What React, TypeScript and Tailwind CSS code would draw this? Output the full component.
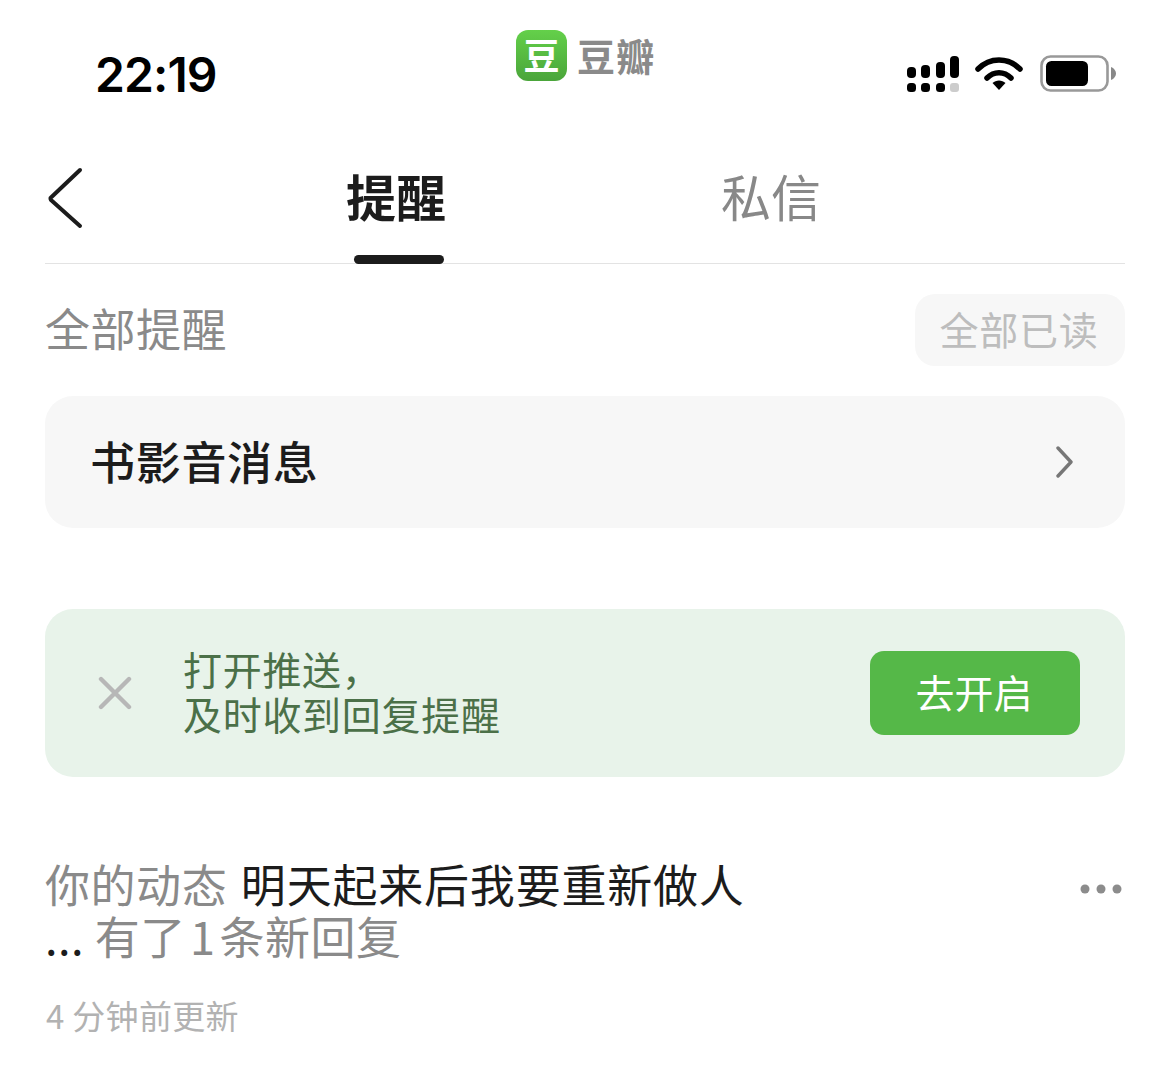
const CJK = '"Noto Sans CJK SC","Noto Sans",sans-serif';

function Signal() {
  const top = [
    [0, 12, 11],
    [14, 10, 13],
    [29, 7, 16],
    [43, 1, 22],
  ];
  return (
    <svg width="52" height="38" viewBox="0 0 52 38" className="block">
      {top.map(([x, y, h]) => (
        <rect key={x} x={x} y={y} width="9" height={h} rx="4" fill="#000" />
      ))}
      {[0, 14, 29].map((x) => (
        <rect key={x} x={x} y="28" width="9" height="9" rx="3.5" fill="#000" />
      ))}
      <rect x="43" y="28" width="9" height="9" rx="3" fill="#ccc" />
    </svg>
  );
}

function Wifi() {
  return (
    <svg width="48" height="36" viewBox="0 0 48 36" className="block">
      <path d="M3 13 C15 1 33 1 45 13" fill="none" stroke="#000" strokeWidth="5.5" strokeLinecap="round" />
      <path d="M12 22 C19 15 29 15 36 22" fill="none" stroke="#000" strokeWidth="5.5" strokeLinecap="round" />
      <path d="M17.5 27 C21 23.5 27 23.5 30.5 27 L24 34 Z" fill="#000" />
    </svg>
  );
}

function Battery() {
  return (
    <svg width="76" height="38" viewBox="0 0 76 38" className="block">
      <rect x="1.5" y="1.5" width="66" height="34" rx="9" fill="none" stroke="#999" strokeWidth="2.6" />
      <rect x="6" y="6" width="42" height="25" rx="5.5" fill="#000" />
      <path d="M71 12 C74 13 76 16 76 18.5 C76 21 74 24 71 25 Z" fill="#888" />
    </svg>
  );
}

function StatusBar() {
  return (
    <div className="flex h-[140px] items-start">
      <div className="w-[516px] pl-[95px] pt-[47px] text-[48px] leading-[56px] font-semibold text-black tracking-[-0.9px]" style={{ fontFamily: 'Inter, sans-serif' }}>
        22:19
      </div>
      <div className="mt-[30px] flex w-[391px] items-start">
        <div className="flex h-[51px] w-[51px] items-center justify-center rounded-[12px] bg-gradient-to-b from-[#64d04a] to-[#4aa53a] pb-[3px] text-[36px] leading-none font-bold text-white">
          豆
        </div>
        <div className="ml-[10px] mt-[3px] text-[38px] leading-[44px] font-bold text-[#8a8a8a] tracking-[1.3px]">豆瓣</div>
      </div>
      <div className="mt-[55px] flex items-center">
        <Signal />
        <div className="ml-[16px]"><Wifi /></div>
        <div className="ml-[17px]"><Battery /></div>
      </div>
    </div>
  );
}

function Tabs() {
  return (
    <div className="relative flex h-[124px] items-start border-b border-[#e3e3e3]">
      <svg width="40" height="64" viewBox="0 0 40 64" className="mt-[27px] ml-[2px] block">
        <path d="M33 3 L4 30.5 Q3 31 4 33 L33 59" fill="none" stroke="#1c1c1c" strokeWidth="4" strokeLinecap="round" strokeLinejoin="round" />
      </svg>
      <div className="ml-[259px] mt-[22px] text-[50px] leading-[66px] font-bold text-[#1c1c1c]">提醒</div>
      <div className="ml-[275px] mt-[22px] text-[50px] leading-[66px] font-normal text-[#888]">私信</div>
      <div className="absolute left-[309px] bottom-[-1px] h-[9px] w-[90px] rounded-full bg-[#1c1c1c]" />
    </div>
  );
}

function ChevronRight() {
  return (
    <svg width="20" height="32" viewBox="0 0 20 32" className="block">
      <path d="M3 2 L16 16 L3 30" fill="none" stroke="#777" strokeWidth="3.4" strokeLinecap="round" strokeLinejoin="round" />
    </svg>
  );
}

function CloseIcon() {
  return (
    <svg width="34" height="34" viewBox="0 0 34 34" className="block">
      <path d="M3 3 L31 31 M31 3 L3 31" fill="none" stroke="#b7b7b7" strokeWidth="4.4" strokeLinecap="round" />
    </svg>
  );
}

function Dots() {
  return (
    <svg width="44" height="12" viewBox="0 0 44 12" className="block">
      <circle cx="6" cy="6" r="4.5" fill="#8c8c8c" />
      <circle cx="22" cy="6" r="4.5" fill="#8c8c8c" />
      <circle cx="38" cy="6" r="4.5" fill="#8c8c8c" />
    </svg>
  );
}

export default function App() {
  return (
    <div className="h-[1071px] w-[1170px] overflow-hidden bg-white" style={{ fontFamily: CJK }}>
      <StatusBar />
      <div className="px-[45px]">
        <Tabs />
        <div className="mt-[30px] flex h-[72px] items-center justify-between">
          <div className="mt-[-4px] text-[45px] leading-[60px] tracking-[0.5px] text-[#8a8a8a]">全部提醒</div>
          <div className="flex h-[72px] w-[210px] items-center justify-center rounded-[20px] bg-[#f7f7f7] pb-[4px] pr-[2px] text-[39px] leading-none tracking-[0.8px] text-[#bdbdbd]">全部已读</div>
        </div>
        <div className="mt-[30px] flex h-[132px] items-center justify-between rounded-[28px] bg-[#f7f7f7] pl-[45px] pr-[50px]">
          <div className="mt-[-3px] text-[45px] leading-[60px] tracking-[0.7px] font-medium text-[#1c1c1c]">书影音消息</div>
          <ChevronRight />
        </div>
        <div className="mt-[81px] flex h-[168px] items-center rounded-[28px] bg-[#e8f3ea] pl-[53px] pr-[45px]">
          <CloseIcon />
          <div className="ml-[51px] mt-[-4px] flex-1 text-[39px] leading-[45px] tracking-[0.7px] text-[#4b7048]">
            <div>打开推送，</div>
            <div>及时收到回复提醒</div>
          </div>
          <div className="flex h-[84px] w-[210px] items-center justify-center rounded-[14px] bg-[#55b848] pb-[4px] pr-[2px] text-[39px] leading-none text-white">去开启</div>
        </div>
        <div className="mt-[81px] flex items-start justify-between">
          <div className="w-[720px] text-[45px] leading-[52px] tracking-[0.55px] text-[#8a8a8a]">
            你的动态 <span className="ml-[3px] tracking-[0.8px] text-[#1c1c1c]">明天起来后我要重新做人</span>
            <br />
            <span className="text-[#1c1c1c]">...</span> 有了<span className="ml-[4px]">1</span><span className="ml-[4px]">条新回复</span>
          </div>
          <div className="mr-[2px] mt-[25px]"><Dots /></div>
        </div>
        <div className="ml-[1px] mt-[31px] text-[33px] leading-[44px] tracking-[0.3px] text-[#b2b2b2]">4 分钟前更新</div>
      </div>
    </div>
  );
}
